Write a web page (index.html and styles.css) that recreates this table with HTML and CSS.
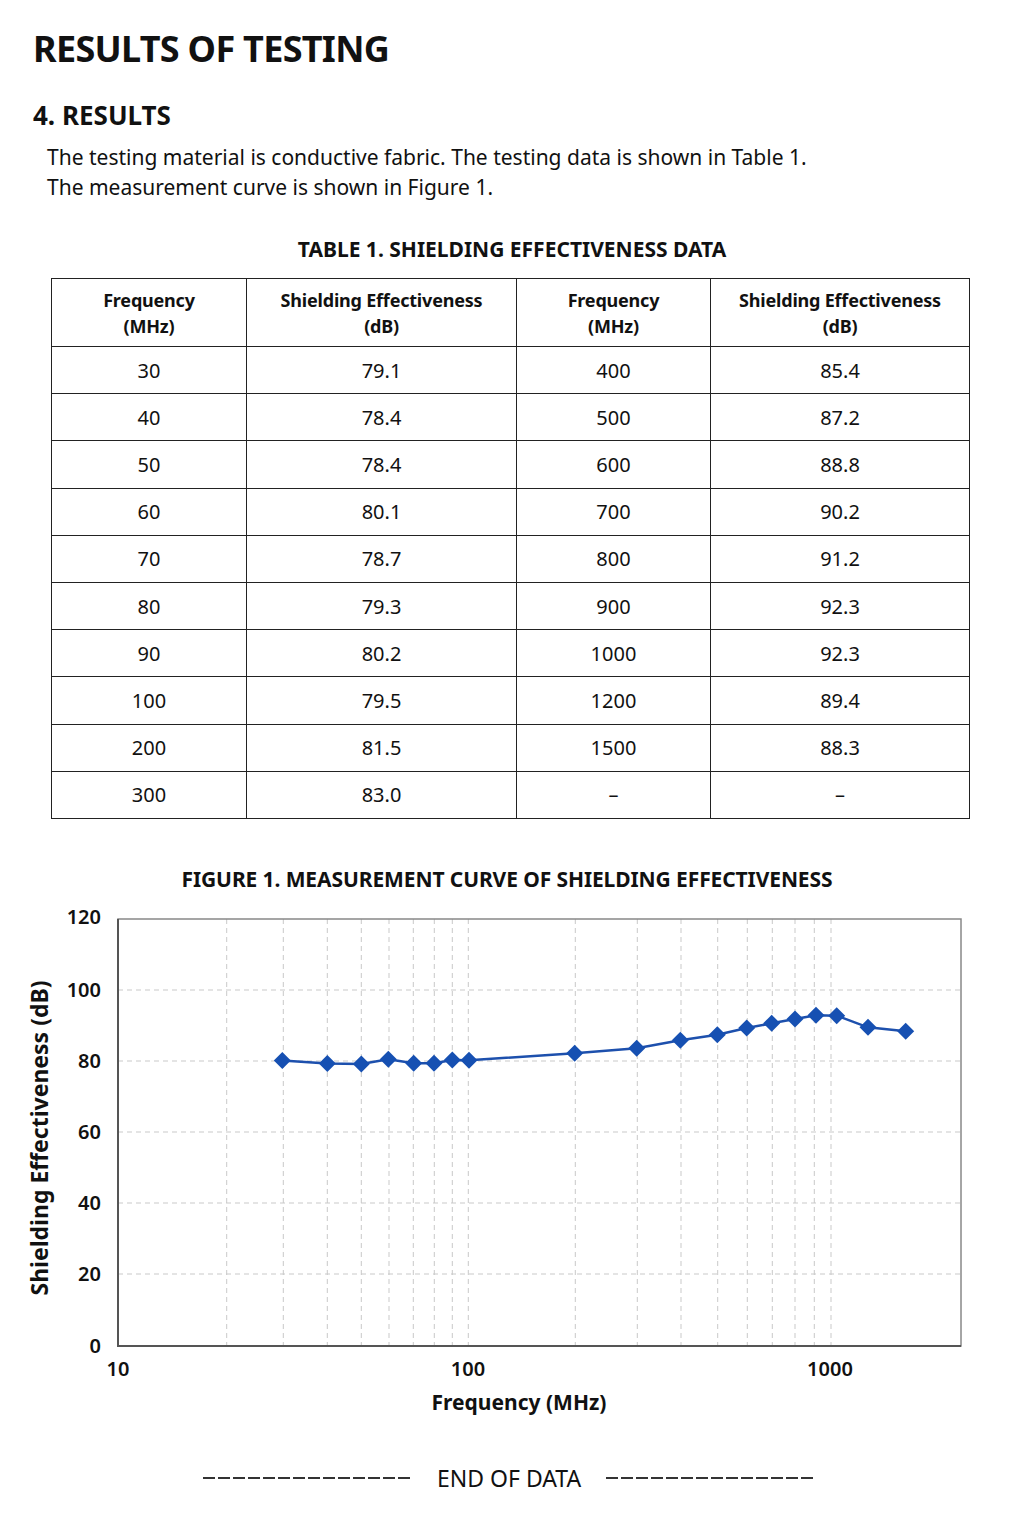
FILE: index.html
```html
<!DOCTYPE html>
<html lang="en">
<head>
  <meta charset="UTF-8">
  <meta name="viewport" content="width=device-width, initial-scale=1.0">
  <title>Results of Testing</title>
  <link rel="stylesheet" href="styles.css">
</head>
<body>
  <main class="page">
    <h1 class="title">RESULTS OF TESTING</h1>
    <h2 class="section">4. RESULTS</h2>
    <p class="intro">
      The testing material is conductive fabric. The testing data is shown in Table 1.<br>
      The measurement curve is shown in Figure 1.
    </p>

    <h3 class="caption">TABLE 1. SHIELDING EFFECTIVENESS DATA</h3>
    <table class="data">
      <colgroup>
        <col style="width:195px">
        <col style="width:270px">
        <col style="width:194px">
        <col style="width:259px">
      </colgroup>
      <thead>
        <tr>
          <th>Frequency<br>(MHz)</th>
          <th>Shielding Effectiveness<br>(dB)</th>
          <th>Frequency<br>(MHz)</th>
          <th>Shielding Effectiveness<br>(dB)</th>
        </tr>
      </thead>
      <tbody>
        <tr><td>30</td><td>79.1</td><td>400</td><td>85.4</td></tr>
        <tr><td>40</td><td>78.4</td><td>500</td><td>87.2</td></tr>
        <tr><td>50</td><td>78.4</td><td>600</td><td>88.8</td></tr>
        <tr><td>60</td><td>80.1</td><td>700</td><td>90.2</td></tr>
        <tr><td>70</td><td>78.7</td><td>800</td><td>91.2</td></tr>
        <tr><td>80</td><td>79.3</td><td>900</td><td>92.3</td></tr>
        <tr><td>90</td><td>80.2</td><td>1000</td><td>92.3</td></tr>
        <tr><td>100</td><td>79.5</td><td>1200</td><td>89.4</td></tr>
        <tr><td>200</td><td>81.5</td><td>1500</td><td>88.3</td></tr>
        <tr><td>300</td><td>83.0</td><td>&ndash;</td><td>&ndash;</td></tr>
      </tbody>
    </table>

    <h3 class="caption fig-caption">FIGURE 1. MEASUREMENT CURVE OF SHIELDING EFFECTIVENESS</h3>
    <svg class="chart" viewBox="0 0 1024 520" xmlns="http://www.w3.org/2000/svg">
      <defs>
        <marker id="diamond" viewBox="-9 -9 18 18" markerWidth="18" markerHeight="18" markerUnits="userSpaceOnUse">
          <path d="M0 -8.5 L8.5 0 L0 8.5 L-8.5 0 Z" fill="#1650b2"/>
        </marker>
      </defs>

      <!-- grid -->
      <g class="grid">
        <line x1="118" y1="89" x2="961" y2="89"/>
        <line x1="118" y1="160" x2="961" y2="160"/>
        <line x1="118" y1="231" x2="961" y2="231"/>
        <line x1="118" y1="302" x2="961" y2="302"/>
        <line x1="118" y1="373" x2="961" y2="373"/>

        <line x1="226.7" y1="18" x2="226.7" y2="445"/>
        <line x1="283.3" y1="18" x2="283.3" y2="445"/>
        <line x1="327.3" y1="18" x2="327.3" y2="445"/>
        <line x1="361.3" y1="18" x2="361.3" y2="445"/>
        <line x1="389" y1="18" x2="389" y2="445"/>
        <line x1="413.3" y1="18" x2="413.3" y2="445"/>
        <line x1="434.3" y1="18" x2="434.3" y2="445"/>
        <line x1="452.3" y1="18" x2="452.3" y2="445"/>
        <line x1="468.3" y1="18" x2="468.3" y2="445"/>
        <line x1="575.3" y1="18" x2="575.3" y2="445"/>
        <line x1="637.3" y1="18" x2="637.3" y2="445"/>
        <line x1="681" y1="18" x2="681" y2="445"/>
        <line x1="717.7" y1="18" x2="717.7" y2="445"/>
        <line x1="747.3" y1="18" x2="747.3" y2="445"/>
        <line x1="772.3" y1="18" x2="772.3" y2="445"/>
        <line x1="795" y1="18" x2="795" y2="445"/>
        <line x1="814.3" y1="18" x2="814.3" y2="445"/>
        <line x1="831" y1="18" x2="831" y2="445"/>
      </g>

      <rect class="frame" x="118" y="18" width="843" height="427"/>
      <path class="axis" d="M118 18 V445 H961"/>

      <!-- y ticks -->
      <g class="tick" text-anchor="end">
        <text x="101" y="23">120</text>
        <text x="101" y="96">100</text>
        <text x="101" y="167">80</text>
        <text x="101" y="238">60</text>
        <text x="101" y="309">40</text>
        <text x="101" y="380">20</text>
        <text x="101" y="452">0</text>
      </g>

      <!-- x ticks -->
      <g class="tick" text-anchor="middle">
        <text x="118" y="475">10</text>
        <text x="468" y="475">100</text>
        <text x="830" y="475">1000</text>
      </g>

      <text class="axis-title" x="519" y="509" text-anchor="middle">Frequency (MHz)</text>
      <text class="axis-title y-title" transform="translate(48 237) rotate(-90)" text-anchor="middle">Shielding Effectiveness (dB)</text>

      <!-- measured data -->
      <polyline class="series"
        points="282.3,159.5 327.3,162.5 361.3,163 388.3,158.3 413.7,162.3 434,162.3 452.3,159 469,159.3 574.7,152.3 636.7,147.3 680.3,139.3 717.3,133.7 746.7,127 771.7,122.3 795,118 816,114.3 836.7,114.7 868,126.3 905.7,130.3"/>
    </svg>

    <div class="end">
      <span class="rule"></span>
      <span class="end-text">END OF DATA</span>
      <span class="rule"></span>
    </div>
  </main>
</body>
</html>
```

FILE: styles.css
```css
* {
  box-sizing: border-box;
}
body {
  margin: 0;
  background: #fff;
  color: #111;
  font-family: "Noto Sans", "Open Sans", sans-serif;
}
.page {
  width: 1024px;
  padding-top: 27px;
}
.title {
  margin: 0 0 28px 33px;
  font-size: 36px;
  line-height: 44px;
  font-weight: 700;
  letter-spacing: -0.7px;
}
.section {
  margin: 0 0 11px 33px;
  font-size: 26px;
  line-height: 32px;
  font-weight: 700;
}
.intro {
  margin: 0 0 33px 47px;
  font-size: 21px;
  line-height: 30px;
}
.caption {
  margin: 0 0 15px;
  text-align: center;
  font-size: 21px;
  line-height: 28px;
  font-weight: 700;
}
.fig-caption {
  margin: 46px 0 8px;
  padding-right: 10px;
  font-size: 21px;
  letter-spacing: -0.1px;
}
.data {
  margin-left: 51px;
  width: 918px;
  border-collapse: collapse;
  table-layout: fixed;
  font-size: 20px;
}
.data th,
.data td {
  border: 1.5px solid #222;
  padding: 0;
  text-align: center;
}
.data th {
  height: 68px;
  font-size: 18px;
  line-height: 26px;
  font-weight: 700;
  letter-spacing: -0.2px;
}
.data td {
  height: 47.2px;
}
.chart {
  display: block;
  width: 1024px;
  height: 520px;
}
.grid line {
  stroke: #c9c9c9;
  stroke-width: 1;
  stroke-dasharray: 5 4;
}
.frame {
  fill: none;
  stroke: #888;
  stroke-width: 1.5;
}
.axis {
  fill: none;
  stroke: #555;
  stroke-width: 2;
}
.tick {
  font-size: 20px;
  font-weight: 600;
  fill: #111;
}
.axis-title {
  font-size: 21px;
  font-weight: 700;
  fill: #111;
}
.y-title {
  font-size: 23px;
}
.series {
  fill: none;
  stroke: #1d50ad;
  stroke-width: 2.5;
  marker-start: url(#diamond);
  marker-mid: url(#diamond);
  marker-end: url(#diamond);
}
.end {
  display: flex;
  align-items: center;
  gap: 25px;
  margin-top: 42px;
  padding-left: 203px;
  font-size: 23px;
  line-height: 30px;
}
.rule {
  width: 209px;
  height: 2px;
  background: repeating-linear-gradient(90deg, #333 0 12px, transparent 12px 15px);
}
```
